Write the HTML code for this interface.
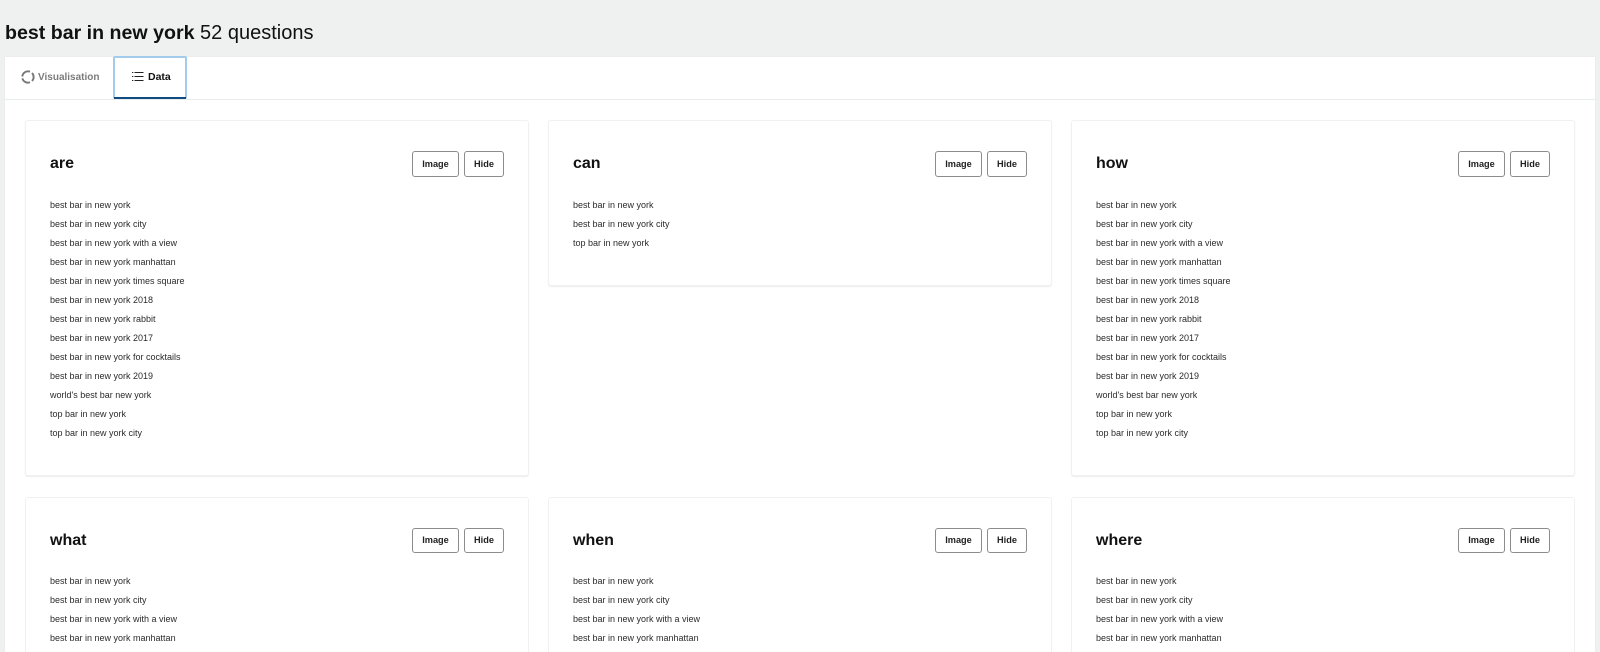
<!DOCTYPE html>
<html><head><meta charset="utf-8"><style>
*{box-sizing:border-box}
html,body{margin:0;padding:0;width:1600px;height:652px;overflow:hidden;background:#eff1f0;font-family:"Liberation Sans",sans-serif;color:#111}
#wrap{position:relative;width:1600px;height:652px;overflow:hidden;background:#eff1f0}
.abs{position:absolute}
#title{left:5px;top:20px;font-size:20px;line-height:26px;white-space:nowrap;color:#111}
#title b{font-size:19.6px}
#panel{left:5px;top:57px;width:1590px;height:595px;background:#fff;box-shadow:0 0 1px #ddd}
#div{left:5px;top:99px;width:1590px;height:1px;background:#e9ebea}
#tab{left:113px;top:56px;width:74px;height:43px;border:2px solid #a3cbec;border-radius:2px;background:#fff}
#tabline{left:114px;top:97px;width:72px;height:2px;background:#0f4c81}
.tl{font-weight:bold;line-height:14px;top:70px;white-space:nowrap}
.card{position:absolute;width:504px;background:#fff;border:1px solid #f0f1f1;border-radius:3px;box-shadow:0 1px 1px #ebeded;overflow:hidden}
.card h2{position:absolute;left:24px;top:33px;margin:0;font-size:16px;line-height:20px;font-weight:bold;color:#111}
.b{position:absolute;top:30px;height:26px;background:#fff;border:1px solid #8c8c8c;border-radius:3px;font-size:9.2px;font-weight:bold;line-height:24px;text-align:center;color:#222}
.i{left:386px;width:47px}
.h{left:438px;width:40px}
.card ul{position:absolute;left:24px;top:75px;margin:0;padding:0;list-style:none;font-size:9px;line-height:19px;color:#2b2b2b;white-space:nowrap}
.r2{height:155px;border-bottom:0;border-radius:3px 3px 0 0;box-shadow:none}
.r2 .b{top:30px;height:25px;line-height:23px}
.r2 ul{top:74px}
</style></head><body><div id="wrap">
<div class="abs" id="title"><b>best bar in new york</b> 52 questions</div>
<div class="abs" id="panel"></div>
<div class="abs" id="div"></div>
<svg class="abs" style="left:21px;top:70px" width="14" height="14" viewBox="0 0 14 14" fill="none" stroke="#777" stroke-width="1.900"><path d="M9 1.700A5.700 5.700 0 0 0 1.300 6.500M1.400 8.300A5.700 5.700 0 0 0 9 12.300M11 11A5.700 5.700 0 0 0 11 3"/></svg>
<div class="abs tl" style="left:38px;top:71px;color:#7c7c7c;font-size:10px">Visualisation</div>
<div class="abs" id="tab"></div>
<div class="abs" id="tabline"></div>
<svg class="abs" style="left:131px;top:71px" width="13" height="11" viewBox="0 0 13 11" fill="none" stroke="#222" stroke-width="1"><path d="M3.500 1.500H12.500M3.500 5.500H12.500M3.500 9.500H12.500M1 1.500H2.300M1 5.500H2.300M1 9.500H2.300"/></svg>
<div class="abs tl" style="left:148px;color:#111;font-size:10.5px">Data</div>

<div class="card" style="left:25px;top:120px;height:356px"><h2>are</h2><div class="b i">Image</div><div class="b h">Hide</div><ul><li>best bar in new york</li><li>best bar in new york city</li><li>best bar in new york with a view</li><li>best bar in new york manhattan</li><li>best bar in new york times square</li><li>best bar in new york 2018</li><li>best bar in new york rabbit</li><li>best bar in new york 2017</li><li>best bar in new york for cocktails</li><li>best bar in new york 2019</li><li>world's best bar new york</li><li>top bar in new york</li><li>top bar in new york city</li></ul></div>
<div class="card" style="left:548px;top:120px;height:166px"><h2>can</h2><div class="b i">Image</div><div class="b h">Hide</div><ul><li>best bar in new york</li><li>best bar in new york city</li><li>top bar in new york</li></ul></div>
<div class="card" style="left:1071px;top:120px;height:356px"><h2>how</h2><div class="b i">Image</div><div class="b h">Hide</div><ul><li>best bar in new york</li><li>best bar in new york city</li><li>best bar in new york with a view</li><li>best bar in new york manhattan</li><li>best bar in new york times square</li><li>best bar in new york 2018</li><li>best bar in new york rabbit</li><li>best bar in new york 2017</li><li>best bar in new york for cocktails</li><li>best bar in new york 2019</li><li>world's best bar new york</li><li>top bar in new york</li><li>top bar in new york city</li></ul></div>
<div class="card r2" style="left:25px;top:497px"><h2>what</h2><div class="b i">Image</div><div class="b h">Hide</div><ul><li>best bar in new york</li><li>best bar in new york city</li><li>best bar in new york with a view</li><li>best bar in new york manhattan</li></ul></div>
<div class="card r2" style="left:548px;top:497px"><h2>when</h2><div class="b i">Image</div><div class="b h">Hide</div><ul><li>best bar in new york</li><li>best bar in new york city</li><li>best bar in new york with a view</li><li>best bar in new york manhattan</li></ul></div>
<div class="card r2" style="left:1071px;top:497px"><h2>where</h2><div class="b i">Image</div><div class="b h">Hide</div><ul><li>best bar in new york</li><li>best bar in new york city</li><li>best bar in new york with a view</li><li>best bar in new york manhattan</li></ul></div>
</div></body></html>
